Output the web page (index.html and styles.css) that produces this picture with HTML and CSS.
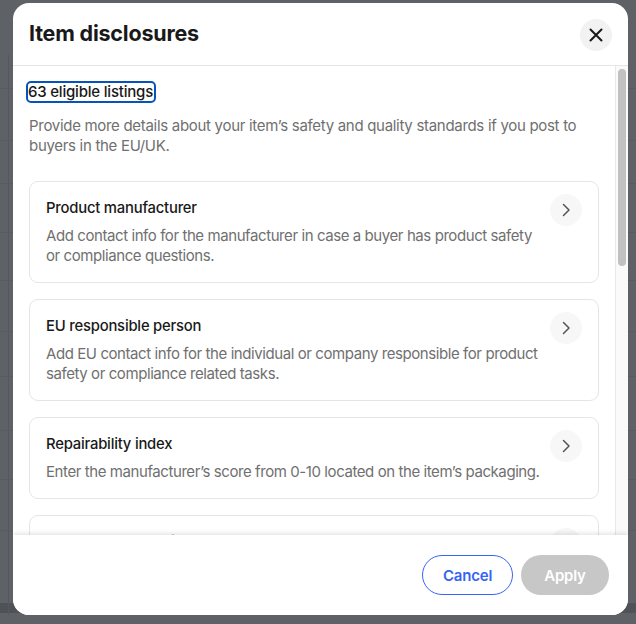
FILE: index.html
```html
<!DOCTYPE html>
<html lang="en">
<head>
<meta charset="utf-8">
<title>Item disclosures</title>
<link rel="stylesheet" href="styles.css">
</head>
<body>
<div class="backdrop">
  <div class="modal" role="dialog" aria-labelledby="dlg-title">
    <header class="modal-header">
      <h2 id="dlg-title" class="modal-title">Item disclosures</h2>
      <button class="icon-btn close-btn" aria-label="Close">
        <svg width="14" height="14" viewBox="0 0 14 14" aria-hidden="true"><path d="M1.5 1.5 L12.5 12.5 M12.5 1.5 L1.5 12.5" stroke="#191919" stroke-width="2" stroke-linecap="round" fill="none"/></svg>
      </button>
    </header>
    <div class="modal-body">
      <div class="content">
        <a class="count-link" href="#">63 eligible listings</a>
        <p class="intro">Provide more details about your item’s safety and quality standards if you post to buyers in the EU/UK.</p>
        <div class="cards">
          <div class="card">
            <div class="card-text">
              <div class="card-title">Product manufacturer</div>
              <div class="card-desc">Add contact info for the manufacturer in case a buyer has product safety or compliance questions.</div>
            </div>
            <button class="icon-btn chev-btn" aria-label="Open">
              <svg width="10" height="14" viewBox="0 0 10 14" aria-hidden="true"><path d="M2.5 1.5 L8 7 L2.5 12.5" stroke="#555" stroke-width="1.5" stroke-linecap="round" stroke-linejoin="round" fill="none"/></svg>
            </button>
          </div>
          <div class="card">
            <div class="card-text">
              <div class="card-title">EU responsible person</div>
              <div class="card-desc">Add EU contact info for the individual or company responsible for product safety or compliance related tasks.</div>
            </div>
            <button class="icon-btn chev-btn" aria-label="Open">
              <svg width="10" height="14" viewBox="0 0 10 14" aria-hidden="true"><path d="M2.5 1.5 L8 7 L2.5 12.5" stroke="#555" stroke-width="1.5" stroke-linecap="round" stroke-linejoin="round" fill="none"/></svg>
            </button>
          </div>
          <div class="card">
            <div class="card-text">
              <div class="card-title">Repairability index</div>
              <div class="card-desc">Enter the manufacturer’s score from 0-10 located on the item’s packaging.</div>
            </div>
            <button class="icon-btn chev-btn" aria-label="Open">
              <svg width="10" height="14" viewBox="0 0 10 14" aria-hidden="true"><path d="M2.5 1.5 L8 7 L2.5 12.5" stroke="#555" stroke-width="1.5" stroke-linecap="round" stroke-linejoin="round" fill="none"/></svg>
            </button>
          </div>
          <div class="card">
            <div class="card-text">
              <div class="card-title">Eco-participation fee</div>
              <div class="card-desc">Enter the eco-participation fee for the item.</div>
            </div>
            <button class="icon-btn chev-btn" aria-label="Open">
              <svg width="10" height="14" viewBox="0 0 10 14" aria-hidden="true"><path d="M2.5 1.5 L8 7 L2.5 12.5" stroke="#555" stroke-width="1.5" stroke-linecap="round" stroke-linejoin="round" fill="none"/></svg>
            </button>
          </div>
        </div>
      </div>
      <div class="scroll-track"><div class="scroll-thumb"></div></div>
    </div>
    <footer class="modal-footer">
      <button class="btn btn-secondary">Cancel</button>
      <button class="btn btn-primary" disabled>Apply</button>
    </footer>
  </div>
</div>
</body>
</html>
```
FILE: styles.css
```css
* { box-sizing: border-box; }

html, body {
  margin: 0;
  padding: 0;
  height: 100%;
}

body {
  font-family: Inter, "Liberation Sans", Arial, sans-serif;
  color: #191919;
  background-color: #5e6166;
  background-image:
    linear-gradient(#55585c, #55585c),
    linear-gradient(#585b5f, #585b5f),
    linear-gradient(#585b5f, #585b5f),
    linear-gradient(#585b5f, #585b5f),
    linear-gradient(#585b5f, #585b5f),
    linear-gradient(#585b5f, #585b5f),
    linear-gradient(#585b5f, #585b5f),
    linear-gradient(#585b5f, #585b5f),
    linear-gradient(#585b5f, #585b5f),
    linear-gradient(#585b5f, #585b5f),
    linear-gradient(#585b5f, #585b5f),
    linear-gradient(#4f5256, #4f5256);
  background-size:
    1px 560px,
    100% 1px, 100% 1px, 100% 1px, 100% 1px, 100% 1px,
    100% 1px, 100% 1px, 100% 1px, 100% 1px, 100% 1px,
    100% 10px;
  background-position:
    8px 55px,
    0 88px, 0 140px, 0 183px, 0 232px, 0 280px,
    0 331px, 0 376px, 0 430px, 0 479px, 0 530px,
    0 603px;
  background-repeat: no-repeat;
}

.backdrop {
  padding: 3px 8px 9px 13px;
  height: 624px;
}

.modal {
  width: 615px;
  height: 612px;
  background: #fff;
  border-radius: 16px;
  display: flex;
  flex-direction: column;
  overflow: hidden;
}

.modal-header {
  flex: 0 0 auto;
  height: 63px;
  display: flex;
  align-items: center;
  justify-content: space-between;
  padding: 0 16px 0 16px;
  border-bottom: 1px solid #e5e5e5;
}

.modal-title {
  margin: 0;
  font-size: 21.5px;
  line-height: 28px;
  font-weight: 700;
  letter-spacing: -0.2px;
  color: #191919;
  padding-bottom: 2px;
}

.icon-btn {
  border: 0;
  padding: 0;
  margin: 0;
  width: 32px;
  height: 32px;
  border-radius: 50%;
  background: #f7f7f7;
  display: flex;
  align-items: center;
  justify-content: center;
  flex: 0 0 auto;
}

.close-btn {
  background: #f2f2f2;
  margin-top: 2px;
}

.modal-body {
  flex: 1 1 auto;
  min-height: 0;
  display: flex;
  overflow: hidden;
}

.content {
  flex: 1 1 auto;
  min-width: 0;
  padding: 15px 16px 0 16px;
}

.count-link {
  display: inline-block;
  font-size: 15px;
  line-height: 18px;
  font-weight: 500;
  color: #191919;
  text-decoration: none;
  outline: 2px solid #0654ba;
  outline-offset: 0;
  border-radius: 3px;
  padding: 0 1px 0 0;
  margin-left: -1px;
  margin-top: 2px;
  letter-spacing: -0.2px;
}

.intro {
  margin: 15px 0 0 0;
  font-size: 15px;
  line-height: 20px;
  color: #707070;
  letter-spacing: -0.3px;
}

.cards {
  margin-top: 25px;
  display: flex;
  flex-direction: column;
  gap: 16px;
}

.card {
  border: 1px solid #e5e5e5;
  border-radius: 9px;
  padding: 12px 16px 16px 16px;
  display: flex;
  align-items: flex-start;
  gap: 2px;
}

.card-text {
  flex: 1 1 auto;
  min-width: 0;
  padding-top: 4px;
}

.card-title {
  font-size: 14.8px;
  line-height: 20px;
  font-weight: 500;
  color: #191919;
  letter-spacing: -0.2px;
}

.card-desc {
  margin-top: 8px;
  font-size: 15px;
  line-height: 20px;
  color: #707070;
  letter-spacing: -0.42px;
}

.scroll-track {
  flex: 0 0 13px;
  background: #fafafa;
  border-left: 1px solid #e8e8e8;
  padding: 3px 2px 0 2px;
}

.scroll-thumb {
  width: 8px;
  height: 197px;
  border-radius: 4px;
  background: #c1c1c1;
}

.modal-footer {
  flex: 0 0 auto;
  position: relative;
  z-index: 1;
  height: 80px;
  background: #fff;
  box-shadow: 0 -2px 4px rgba(0, 0, 0, 0.1);
  display: flex;
  align-items: center;
  justify-content: flex-end;
  gap: 8px;
  padding: 0 19px 0 16px;
}

.btn {
  height: 40px;
  border-radius: 20px;
  font-family: inherit;
  font-size: 15px;
  font-weight: 600;
  letter-spacing: -0.2px;
  padding: 0 20px;
}

.btn-secondary {
  width: 91px;
  background: #fff;
  color: #3665f3;
  border: 1px solid #3665f3;
}

.btn-primary {
  width: 88px;
  background: #c7c7c7;
  color: #fff;
  border: 0;
}
```
